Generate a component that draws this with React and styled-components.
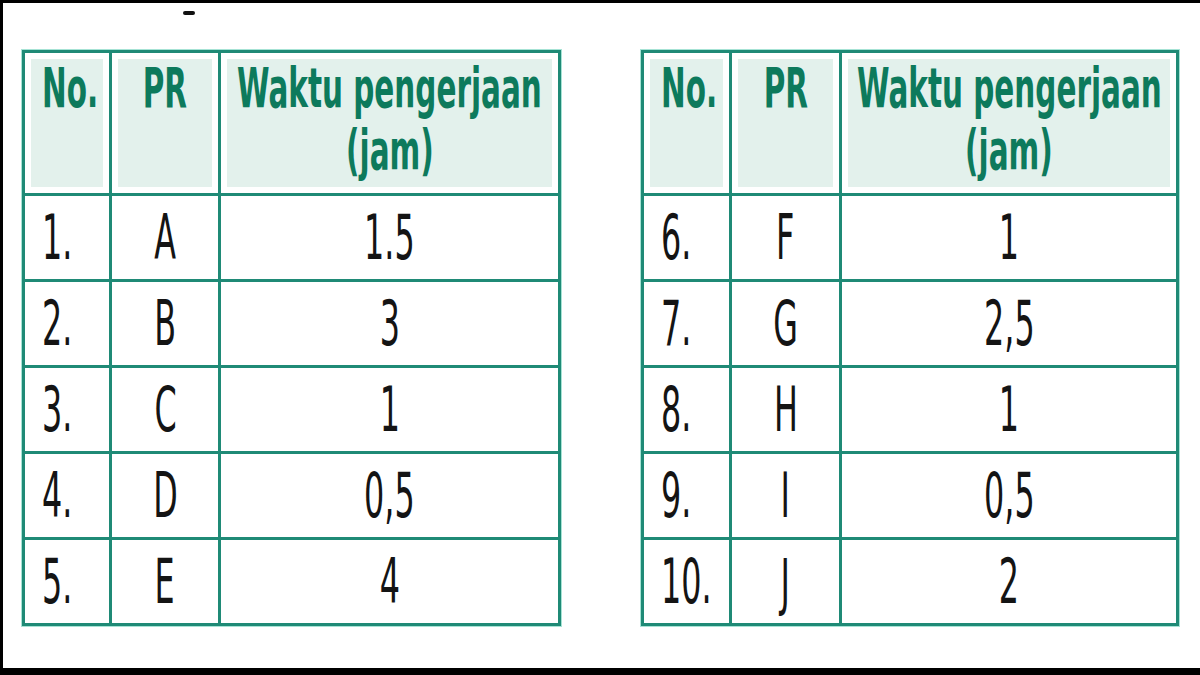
import styled, { createGlobalStyle } from "styled-components";

const Global = createGlobalStyle`
  html, body {
    margin: 0;
    padding: 0;
    background: #000;
  }
  body {
    font-family: "DejaVu Sans Condensed", "Liberation Sans Narrow", "Liberation Sans", sans-serif;
  }
`;

const Frame = styled.div`
  width: 1197px;
  height: 665px;
  margin: 3px 0 0 3px;
  background: #fff;
  position: relative;
  box-sizing: border-box;
  padding: 47px 0 0 19px;
  display: flex;
  gap: 80px;
`;

const Tick = styled.div`
  position: absolute;
  left: 180px;
  top: 8px;
  width: 12px;
  height: 4px;
  background: #111;
  border-radius: 2px;
`;

const Table = styled.table`
  border-collapse: collapse;
  table-layout: fixed;
  width: ${(p) => p.$w}px;
  border: 3px solid #1f8a76;
  box-shadow: 0 0 0 1px #a6e3d5;
  align-self: flex-start;
`;

const Th = styled.th`
  height: 136px;
  border: 3px solid #1f8a76;
  background: #e3f1ec;
  box-shadow: inset 0 0 0 6px #fff;
  color: #0d7a5c;
  font-weight: 700;
  font-size: 56px;
  line-height: 62px;
  vertical-align: top;
  padding: 4px 0 0 ${(p) => (p.$align === "left" ? "17px" : "0")};
  overflow: visible;
`;

const Td = styled.td`
  height: 83px;
  border: 3px solid #1f8a76;
  color: #141414;
  font-size: 62px;
  line-height: 62px;
  padding: 0 0 0 ${(p) => (p.$align === "left" ? "17px" : "0")};
  vertical-align: middle;
`;

const Line = styled.div`
  display: flex;
  justify-content: ${(p) => (p.$align === "left" ? "flex-start" : "center")};
  white-space: nowrap;
`;

const Squeeze = styled.span`
  display: block;
  transform: scaleX(${(p) => p.$k});
  transform-origin: ${(p) => (p.$align === "left" ? "left" : "center")} center;
`;

const Cell = ({ as: Comp, align, lines, k }) => (
  <Comp $align={align}>
    {lines.map((l) => (
      <Line key={l} $align={align}>
        <Squeeze $align={align} $k={k}>
          {l}
        </Squeeze>
      </Line>
    ))}
  </Comp>
);

const left = [
  ["1.", "A", "1.5"],
  ["2.", "B", "3"],
  ["3.", "C", "1"],
  ["4.", "D", "0,5"],
  ["5.", "E", "4"],
];

const right = [
  ["6.", "F", "1"],
  ["7.", "G", "2,5"],
  ["8.", "H", "1"],
  ["9.", "I", "0,5"],
  ["10.", "J", "2"],
];

const TimeTable = ({ rows, widths }) => (
  <Table $w={widths.reduce((a, b) => a + b, 0)}>
    <colgroup>
      {widths.map((w, i) => (
        <col key={i} style={{ width: w }} />
      ))}
    </colgroup>
    <thead>
      <tr>
        <Cell as={Th} k={0.585} align="left" lines={["No."]} />
        <Cell as={Th} k={0.585} lines={["PR"]} />
        <Cell as={Th} k={0.585} lines={["Waktu pengerjaan", "(jam)"]} />
      </tr>
    </thead>
    <tbody>
      {rows.map((r) => (
        <tr key={r[0]}>
          <Cell as={Td} k={0.57} align="left" lines={[r[0]]} />
          <Cell as={Td} k={0.57} lines={[r[1]]} />
          <Cell as={Td} k={0.57} lines={[r[2]]} />
        </tr>
      ))}
    </tbody>
  </Table>
);

export default function App() {
  return (
    <>
      <Global />
      <Frame>
        <Tick />
        <TimeTable rows={left} widths={[87, 109, 340]} />
        <TimeTable rows={right} widths={[88, 110, 337]} />
      </Frame>
    </>
  );
}
